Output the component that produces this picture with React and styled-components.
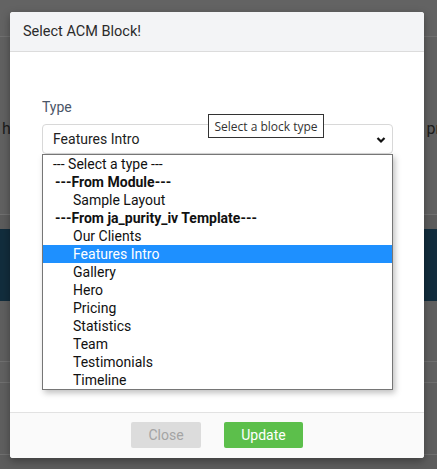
import React from 'react'
import styled, { createGlobalStyle } from 'styled-components'

const GlobalStyle = createGlobalStyle`
  html, body { margin: 0; padding: 0; }
  body {
    width: 437px;
    height: 469px;
    overflow: hidden;
    font-family: Roboto, "Liberation Sans", sans-serif;
    background: #616161;
  }
`

const options = [
  { label: '--- Select a type ---', kind: 'placeholder' },
  { label: '---From Module---', kind: 'group' },
  { label: 'Sample Layout', kind: 'option' },
  { label: '---From ja_purity_iv Template---', kind: 'group' },
  { label: 'Our Clients', kind: 'option' },
  { label: 'Features Intro', kind: 'option', active: true },
  { label: 'Gallery', kind: 'option' },
  { label: 'Hero', kind: 'option' },
  { label: 'Pricing', kind: 'option' },
  { label: 'Statistics', kind: 'option' },
  { label: 'Team', kind: 'option' },
  { label: 'Testimonials', kind: 'option' },
  { label: 'Timeline', kind: 'option' },
]

const App = () => {
  return (
    <Page>
      <GlobalStyle />
      <Backdrop>
        <Band $h={37} $bg="#636363" $line />
        <Band $h={178} $bg="#616161" $line>
          <BgText>
            <span>h</span>
            <span>pr</span>
          </BgText>
        </Band>
        <Band $h={14} $bg="#5c5c5c" />
        <Band $h={72} $bg="#122d3d" />
        <Band $h={61} $bg="#5f5f5f" $line />
        <Band $h={21} $bg="#616161" $line />
        <Band $h={72} $bg="#5f5f5f" $line />
        <Band $h={14} $bg="#5d5d5d" />
      </Backdrop>

      <Modal>
        <Header>Select ACM Block!</Header>
        <Body>
          <Label>Type</Label>
          <SelectWrap>
            <SelectBox>
              <span>Features Intro</span>
              <Chevron viewBox="0 0 10 8" width="10" height="8">
                <path d="M1.5 2 L5 5.5 L8.5 2" fill="none" stroke="#111" strokeWidth="2.2" />
              </Chevron>
            </SelectBox>
            <Tooltip>Select a block type</Tooltip>
            <List>
              {options.map((o, i) => (
                <Item key={i} $kind={o.kind} $active={o.active}>
                  {o.label}
                </Item>
              ))}
            </List>
          </SelectWrap>
        </Body>
        <Footer>
          <Button $variant="close">Close</Button>
          <Button $variant="update">Update</Button>
        </Footer>
      </Modal>
    </Page>
  )
}

export default App

const Page = styled.div`
  position: relative;
  width: 437px;
  height: 469px;
  overflow: hidden;
`

const Backdrop = styled.div`
  display: flex;
  flex-direction: column;
  height: 100%;
`

const Band = styled.div`
  height: ${p => p.$h}px;
  flex-shrink: 0;
  background: ${p => p.$bg};
  border-bottom: ${p => (p.$line ? '1px solid #707070' : 'none')};
  box-sizing: border-box;
  display: flex;
  flex-direction: column;
`

const BgText = styled.div`
  margin-top: 82px;
  display: flex;
  justify-content: space-between;
  padding: 0 0 0 2px;
  font-size: 16px;
  color: #1c1c1c;
  margin-right: -4px;
`

const Modal = styled.div`
  position: absolute;
  left: 10px;
  top: 12px;
  width: 414px;
  height: 446px;
  background: #fff;
  border-radius: 3px;
  box-shadow: 0 3px 9px rgba(0, 0, 0, 0.35);
  display: flex;
  flex-direction: column;
`

const Header = styled.div`
  height: 40px;
  box-sizing: border-box;
  padding: 0 13px;
  display: flex;
  align-items: center;
  background: #f3f4f6;
  border-bottom: 1px solid #dcdcdc;
  border-radius: 3px 3px 0 0;
  font-size: 14.5px;
  color: #2b2b2b;
`

const Body = styled.div`
  flex: 1;
  padding: 46px 31px 0 32px;
  display: flex;
  flex-direction: column;
`

const Label = styled.div`
  font-size: 14px;
  color: #4a5668;
  line-height: 18px;
  margin-bottom: 8px;
`

const SelectWrap = styled.div`
  position: relative;
`

const SelectBox = styled.div`
  height: 30px;
  box-sizing: border-box;
  border: 1px solid #d8d8d8;
  border-radius: 4px;
  padding: 0 6px 0 10px;
  display: flex;
  align-items: center;
  justify-content: space-between;
  font-size: 14px;
  color: #222;
`

const Chevron = styled.svg`
  display: block;
  margin-top: 2px;
`

const Tooltip = styled.div`
  position: absolute;
  left: 166px;
  top: -10px;
  width: 116px;
  height: 24px;
  box-sizing: border-box;
  border: 1px solid #333;
  background: #fff;
  font-family: "Open Sans", "Noto Sans", sans-serif;
  font-size: 12px;
  color: #333;
  display: flex;
  align-items: center;
  justify-content: center;
  white-space: nowrap;
  z-index: 2;
`

const List = styled.div`
  position: absolute;
  left: 0;
  top: 30px;
  width: 351px;
  box-sizing: border-box;
  border: 1px solid #767676;
  background: #fff;
  box-shadow: 2px 3px 6px rgba(0, 0, 0, 0.25);
  z-index: 1;
`

const Item = styled.div`
  height: 18px;
  line-height: 18px;
  font-size: 14px;
  white-space: nowrap;
  color: ${p => (p.$active ? '#fff' : '#111')};
  background: ${p => (p.$active ? '#1e90ff' : 'transparent')};
  font-weight: ${p => (p.$kind === 'group' ? 700 : 400)};
  padding-left: ${p => (p.$kind === 'option' ? 30 : p.$kind === 'group' ? 12 : 10)}px;
`

const Footer = styled.div`
  height: 46px;
  box-sizing: border-box;
  border-top: 1px solid #e2e2e2;
  background: #fafafa;
  border-radius: 0 0 3px 3px;
  display: flex;
  align-items: center;
  justify-content: center;
  gap: 23px;
  padding-bottom: 2px;
`

const Button = styled.button`
  height: 26px;
  border: none;
  border-radius: 2px;
  font-family: Roboto, "Liberation Sans", sans-serif;
  font-size: 14px;
  padding: 0;
  width: ${p => (p.$variant === 'close' ? 70 : 79)}px;
  background: ${p => (p.$variant === 'close' ? '#dcdcdc' : '#5cbf4b')};
  color: ${p => (p.$variant === 'close' ? '#a4a4a4' : '#fff')};
`
